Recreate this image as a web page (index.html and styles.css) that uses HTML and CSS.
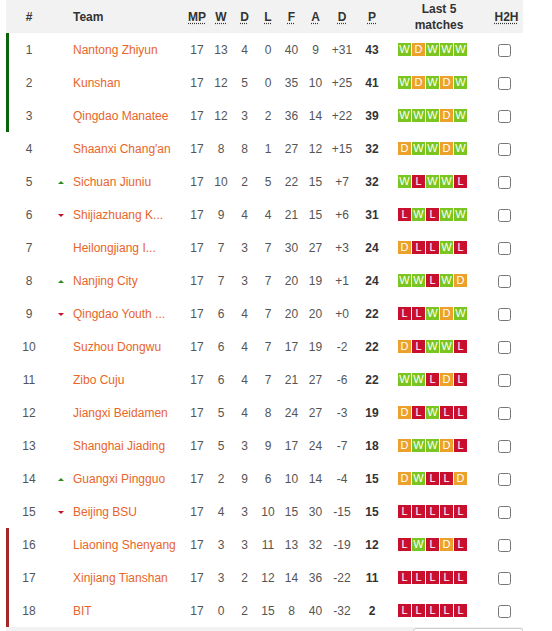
FILE: index.html
```html
<!DOCTYPE html>
<html>
<head>
<meta charset="utf-8">
<link rel="stylesheet" href="styles.css">
</head>
<body>
<table class="standings">
  <colgroup>
    <col class="c-rank"><col class="c-arrow"><col class="c-team"><col class="c-num"><col class="c-num"><col class="c-d"><col class="c-num"><col class="c-f"><col class="c-a"><col class="c-diff"><col class="c-pts"><col class="c-form"><col class="c-h2h">
  </colgroup>
  <thead>
    <tr>
      <th class="rank">#</th>
      <th></th>
      <th class="team">Team</th>
      <th><abbr>MP</abbr></th>
      <th><abbr>W</abbr></th>
      <th><abbr>D</abbr></th>
      <th><abbr>L</abbr></th>
      <th><abbr>F</abbr></th>
      <th><abbr>A</abbr></th>
      <th><abbr>D</abbr></th>
      <th><abbr>P</abbr></th>
      <th class="form-h">Last 5<br>matches</th>
      <th><abbr>H2H</abbr></th>
    </tr>
  </thead>
  <tbody>
    <tr class="promo"><td class="rank">1</td><td></td><td class="team">Nantong Zhiyun</td><td>17</td><td>13</td><td>4</td><td>0</td><td>40</td><td>9</td><td>+31</td><td class="pts">43</td><td class="form"><span class="w">W</span><span class="d">D</span><span class="w">W</span><span class="w">W</span><span class="w">W</span></td><td class="h2h"><input type="checkbox"></td></tr>
    <tr class="promo"><td class="rank">2</td><td></td><td class="team">Kunshan</td><td>17</td><td>12</td><td>5</td><td>0</td><td>35</td><td>10</td><td>+25</td><td class="pts">41</td><td class="form"><span class="w">W</span><span class="d">D</span><span class="w">W</span><span class="d">D</span><span class="w">W</span></td><td class="h2h"><input type="checkbox"></td></tr>
    <tr class="promo"><td class="rank">3</td><td></td><td class="team">Qingdao Manatee</td><td>17</td><td>12</td><td>3</td><td>2</td><td>36</td><td>14</td><td>+22</td><td class="pts">39</td><td class="form"><span class="w">W</span><span class="w">W</span><span class="w">W</span><span class="d">D</span><span class="w">W</span></td><td class="h2h"><input type="checkbox"></td></tr>
    <tr><td class="rank">4</td><td></td><td class="team">Shaanxi Chang'an</td><td>17</td><td>8</td><td>8</td><td>1</td><td>27</td><td>12</td><td>+15</td><td class="pts">32</td><td class="form"><span class="d">D</span><span class="w">W</span><span class="w">W</span><span class="d">D</span><span class="w">W</span></td><td class="h2h"><input type="checkbox"></td></tr>
    <tr><td class="rank">5</td><td class="arrow"><span class="up"></span></td><td class="team">Sichuan Jiuniu</td><td>17</td><td>10</td><td>2</td><td>5</td><td>22</td><td>15</td><td>+7</td><td class="pts">32</td><td class="form"><span class="w">W</span><span class="l">L</span><span class="w">W</span><span class="w">W</span><span class="l">L</span></td><td class="h2h"><input type="checkbox"></td></tr>
    <tr><td class="rank">6</td><td class="arrow"><span class="down"></span></td><td class="team">Shijiazhuang K...</td><td>17</td><td>9</td><td>4</td><td>4</td><td>21</td><td>15</td><td>+6</td><td class="pts">31</td><td class="form"><span class="l">L</span><span class="w">W</span><span class="l">L</span><span class="w">W</span><span class="w">W</span></td><td class="h2h"><input type="checkbox"></td></tr>
    <tr><td class="rank">7</td><td></td><td class="team">Heilongjiang I...</td><td>17</td><td>7</td><td>3</td><td>7</td><td>30</td><td>27</td><td>+3</td><td class="pts">24</td><td class="form"><span class="d">D</span><span class="l">L</span><span class="l">L</span><span class="w">W</span><span class="l">L</span></td><td class="h2h"><input type="checkbox"></td></tr>
    <tr><td class="rank">8</td><td class="arrow"><span class="up"></span></td><td class="team">Nanjing City</td><td>17</td><td>7</td><td>3</td><td>7</td><td>20</td><td>19</td><td>+1</td><td class="pts">24</td><td class="form"><span class="w">W</span><span class="w">W</span><span class="l">L</span><span class="w">W</span><span class="d">D</span></td><td class="h2h"><input type="checkbox"></td></tr>
    <tr><td class="rank">9</td><td class="arrow"><span class="down"></span></td><td class="team">Qingdao Youth ...</td><td>17</td><td>6</td><td>4</td><td>7</td><td>20</td><td>20</td><td>+0</td><td class="pts">22</td><td class="form"><span class="l">L</span><span class="l">L</span><span class="w">W</span><span class="d">D</span><span class="w">W</span></td><td class="h2h"><input type="checkbox"></td></tr>
    <tr><td class="rank">10</td><td></td><td class="team">Suzhou Dongwu</td><td>17</td><td>6</td><td>4</td><td>7</td><td>17</td><td>19</td><td>-2</td><td class="pts">22</td><td class="form"><span class="d">D</span><span class="l">L</span><span class="w">W</span><span class="w">W</span><span class="l">L</span></td><td class="h2h"><input type="checkbox"></td></tr>
    <tr><td class="rank">11</td><td></td><td class="team">Zibo Cuju</td><td>17</td><td>6</td><td>4</td><td>7</td><td>21</td><td>27</td><td>-6</td><td class="pts">22</td><td class="form"><span class="w">W</span><span class="w">W</span><span class="l">L</span><span class="d">D</span><span class="l">L</span></td><td class="h2h"><input type="checkbox"></td></tr>
    <tr><td class="rank">12</td><td></td><td class="team">Jiangxi Beidamen</td><td>17</td><td>5</td><td>4</td><td>8</td><td>24</td><td>27</td><td>-3</td><td class="pts">19</td><td class="form"><span class="d">D</span><span class="l">L</span><span class="w">W</span><span class="l">L</span><span class="l">L</span></td><td class="h2h"><input type="checkbox"></td></tr>
    <tr><td class="rank">13</td><td></td><td class="team">Shanghai Jiading</td><td>17</td><td>5</td><td>3</td><td>9</td><td>17</td><td>24</td><td>-7</td><td class="pts">18</td><td class="form"><span class="d">D</span><span class="w">W</span><span class="w">W</span><span class="d">D</span><span class="l">L</span></td><td class="h2h"><input type="checkbox"></td></tr>
    <tr><td class="rank">14</td><td class="arrow"><span class="up"></span></td><td class="team">Guangxi Pingguo</td><td>17</td><td>2</td><td>9</td><td>6</td><td>10</td><td>14</td><td>-4</td><td class="pts">15</td><td class="form"><span class="d">D</span><span class="w">W</span><span class="l">L</span><span class="l">L</span><span class="d">D</span></td><td class="h2h"><input type="checkbox"></td></tr>
    <tr><td class="rank">15</td><td class="arrow"><span class="down"></span></td><td class="team">Beijing BSU</td><td>17</td><td>4</td><td>3</td><td>10</td><td>15</td><td>30</td><td>-15</td><td class="pts">15</td><td class="form"><span class="l">L</span><span class="l">L</span><span class="l">L</span><span class="l">L</span><span class="l">L</span></td><td class="h2h"><input type="checkbox"></td></tr>
    <tr class="releg"><td class="rank">16</td><td></td><td class="team">Liaoning Shenyang</td><td>17</td><td>3</td><td>3</td><td>11</td><td>13</td><td>32</td><td>-19</td><td class="pts">12</td><td class="form"><span class="l">L</span><span class="w">W</span><span class="l">L</span><span class="d">D</span><span class="l">L</span></td><td class="h2h"><input type="checkbox"></td></tr>
    <tr class="releg"><td class="rank">17</td><td></td><td class="team">Xinjiang Tianshan</td><td>17</td><td>3</td><td>2</td><td>12</td><td>14</td><td>36</td><td>-22</td><td class="pts">11</td><td class="form"><span class="l">L</span><span class="l">L</span><span class="l">L</span><span class="l">L</span><span class="l">L</span></td><td class="h2h"><input type="checkbox"></td></tr>
    <tr class="releg"><td class="rank">18</td><td></td><td class="team">BIT</td><td>17</td><td>0</td><td>2</td><td>15</td><td>8</td><td>40</td><td>-32</td><td class="pts">2</td><td class="form"><span class="l">L</span><span class="l">L</span><span class="l">L</span><span class="l">L</span><span class="l">L</span></td><td class="h2h"><input type="checkbox"></td></tr>
  </tbody>
</table>
<div class="footer"><div class="footer-box"></div></div>
</body>
</html>
```

FILE: styles.css
```css
html, body {
  margin: 0;
  padding: 0;
  background: #fff;
}
body {
  font-family: "Liberation Sans", Arial, sans-serif;
  font-size: 12px;
  color: #555;
}
.standings {
  margin-left: 6px;
  border-collapse: collapse;
  table-layout: fixed;
  width: 517px;
}
.c-rank { width: 46px; }
.c-arrow { width: 16px; }
.c-team { width: 117px; }
.c-num { width: 24px; }
.c-d { width: 23px; }
.c-f { width: 23px; }
.c-a { width: 25px; }
.c-diff { width: 28px; }
.c-pts { width: 32px; }
.c-form { width: 102px; }
.c-h2h { width: 33px; }

.standings thead tr {
  background: #f2f2f2;
  height: 33px;
}
.standings th {
  padding: 0;
  font-weight: bold;
  color: #333;
  text-align: center;
  font-size: 12px;
  line-height: 16px;
}
.standings th abbr {
  text-decoration: underline dotted;
  text-underline-offset: 2px;
}
.standings th.team {
  text-align: left;
  padding-left: 5px;
}
.standings th.rank {
  padding-left: 0;
}
.standings tbody tr {
  height: 33px;
}
.standings td {
  padding: 0;
  text-align: center;
  white-space: nowrap;
  overflow: hidden;
}
.standings td.rank {
  color: #555;
}
.standings td.team {
  text-align: left;
  padding-left: 5px;
  color: #e8652a;
}
.standings td.pts {
  font-weight: bold;
  color: #333;
}
.promo td.rank {
  box-shadow: inset 3px 0 0 #0b640b;
}
.releg td.rank {
  box-shadow: inset 3px 0 0 #a52727;
}
.arrow span {
  display: inline-block;
  width: 0;
  height: 0;
  border-left: 3px solid transparent;
  border-right: 3px solid transparent;
  vertical-align: middle;
  margin-left: 2px;
}
.arrow .up {
  border-bottom: 3px solid #2e8b1e;
}
.arrow .down {
  border-top: 3px solid #c0102a;
}
.standings td.form {
  text-align: left;
  padding-left: 10px;
  font-size: 0;
}
.form span {
  display: inline-block;
  width: 13px;
  height: 13px;
  line-height: 13px;
  margin-right: 1px;
  text-align: center;
  color: #fff;
  font-size: 11px;
  vertical-align: middle;
}
.form .w { background: #7ac51f; }
.form .d { background: #eca12a; }
.form .l { background: #c8102e; }
.standings td.h2h {
  text-align: left;
  padding-left: 8px;
}
.h2h input {
  margin: 0;
  width: 13px;
  height: 13px;
  vertical-align: middle;
}
.footer {
  margin-left: 6px;
  width: 517px;
  height: 30px;
  background: #f2f2f2;
  padding-top: 1px;
  box-sizing: border-box;
}
.footer-box {
  margin-left: 407px;
  width: 110px;
  height: 28px;
  background: #fff;
  border: 1px solid #ccc;
  border-radius: 3px;
  box-sizing: border-box;
}
```
